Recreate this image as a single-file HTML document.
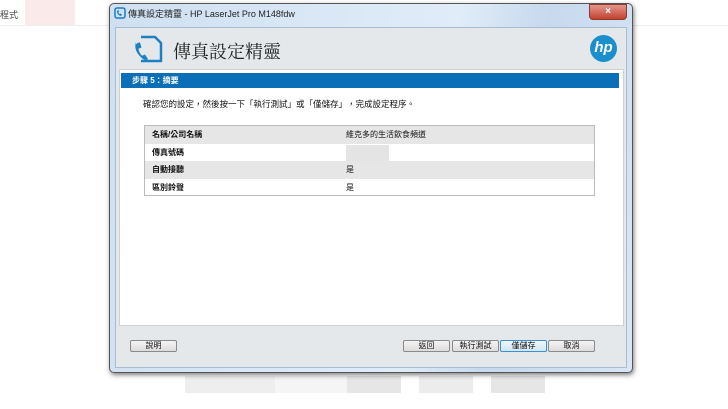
<!DOCTYPE html>
<html><head><meta charset="utf-8"><style>
*{margin:0;padding:0;box-sizing:border-box}
body{width:728px;height:409px;background:#fff;position:relative;overflow:hidden;font-family:"Liberation Sans","Noto Sans CJK TC",sans-serif;font-size:9px;color:#111}
.a{position:absolute}
.btn{position:absolute;top:340px;height:12px;border:1px solid #8a8a8a;border-radius:2px;background:linear-gradient(#f4f4f4,#dcdcdc);font-size:8px;text-align:center;line-height:10px}
.row{position:absolute;left:0;width:100%;height:17.5px;font-size:8px;line-height:17px}
.row b{position:absolute;left:7px}
.row span{position:absolute;left:201px}
</style></head><body>
<div class="a" style="left:0;top:8px;font-size:9px;color:#444">程式</div>
<div class="a" style="left:25px;top:0;width:50px;height:25px;background:#fbeaea"></div>
<div class="a" style="left:0;top:25px;width:728px;height:1px;background:#eee"></div>
<div class="a" style="left:185px;top:376px;width:360px;height:17px;background:linear-gradient(90deg,#eee 0,#eee 25%,#f5f5f5 25%,#f5f5f5 45%,#e6e6e6 45%,#e6e6e6 60%,#fff 60%,#fff 65%,#ececec 65%,#ececec 80%,#fff 80%,#fff 85%,#e6e6e6 85%)"></div>
<div class="a" style="left:109px;top:3px;width:524px;height:370px;border:1px solid #555;border-radius:5px;background:linear-gradient(100deg,#cfe0f2,#e0ecf8 60%,#c7d9ee 75%,#d8e6f5);box-shadow:1px 2px 5px rgba(0,0,0,.5)"></div>
<svg class="a" style="left:114px;top:7px" width="12" height="12" viewBox="0 0 12 12"><rect x="1" y="1" width="10" height="10" rx="2" fill="none" stroke="#1a7dc0" stroke-width="1.5"/><path d="M3 4 q0 4 4 5 l1-1.5 -1.5-1 -1 .6 q-1-.8-1.2-2 l.8-.6 -.6-1.5z" fill="#1a7dc0"/></svg>
<div class="a" style="left:128px;top:7px;font-size:9px;color:#222">傳真設定精靈 - HP LaserJet Pro M148fdw</div>
<div class="a" style="left:589px;top:4px;width:38px;height:16px;background:linear-gradient(#e4978b,#c4412f);border:1px solid #8a3a2e;border-radius:0 0 4px 4px;color:#fff;text-align:center;font-size:10px;line-height:14px;font-weight:bold">×</div>
<div class="a" style="left:115px;top:27px;width:512px;height:341px;background:#e5e8eb;border:1px solid #a9bdd2"></div>
<svg class="a" style="left:132px;top:34px" width="32" height="30" viewBox="0 0 32 30"><path d="M9 3 H23 L29 9 V27 H9" fill="none" stroke="#1d80c3" stroke-width="2.5" stroke-linejoin="round"/><path d="M4 8 q-3 9 7 17 q3 2 5 0 l-3-4.5 l-3 1.2 q-3-3-3.5-7 l3-1.2 l-1.5-5 q-3 0-4 2z" fill="#1d80c3"/></svg>
<div class="a" style="left:173px;top:38px;font-size:18px;color:#222;font-family:'Noto Serif CJK SC','Noto Sans CJK TC',serif">傳真設定精靈</div>
<div class="a" style="left:590px;top:35px;width:27px;height:27px;border-radius:50%;background:#1a8fcb;color:#fff;font-style:italic;font-weight:bold;font-size:15px;text-align:center;line-height:26px">hp</div>
<div class="a" style="left:119px;top:69px;width:505px;height:257px;background:#fff;border:1px solid #d0d0d0"></div>
<div class="a" style="left:121px;top:73px;width:498px;height:15px;background:#0a6fb7;color:#fff;font-weight:bold;font-size:8px;line-height:15px;padding-left:11px">步驟 5：摘要</div>
<div class="a" style="left:143px;top:98px;font-size:8.5px">確認您的設定，然後按一下「執行測試」或「僅儲存」，完成設定程序。</div>
<div class="a" style="left:144px;top:125px;width:451px;height:71px;border:1px solid #bbb">
<div class="row" style="top:0;background:#e6e6e6"><b>名稱/公司名稱</b><span>維克多的生活飲食頻道</span></div>
<div class="row" style="top:17.5px"><b>傳真號碼</b><span style="top:1px;width:43px;height:16px;background:#e4e4e4"></span></div>
<div class="row" style="top:35px;background:#e6e6e6"><b>自動接聽</b><span>是</span></div>
<div class="row" style="top:52.5px"><b>區別鈴聲</b><span>是</span></div>
</div>
<div class="btn" style="left:130px;width:47px">說明</div>
<div class="btn" style="left:403px;width:47px">返回</div>
<div class="btn" style="left:452px;width:47px">執行測試</div>
<div class="btn" style="left:500px;width:47px;border-color:#3c8fd0;background:linear-gradient(#eef6fc,#d2e6f5)">僅儲存</div>
<div class="btn" style="left:548px;width:47px">取消</div>
</body></html>
